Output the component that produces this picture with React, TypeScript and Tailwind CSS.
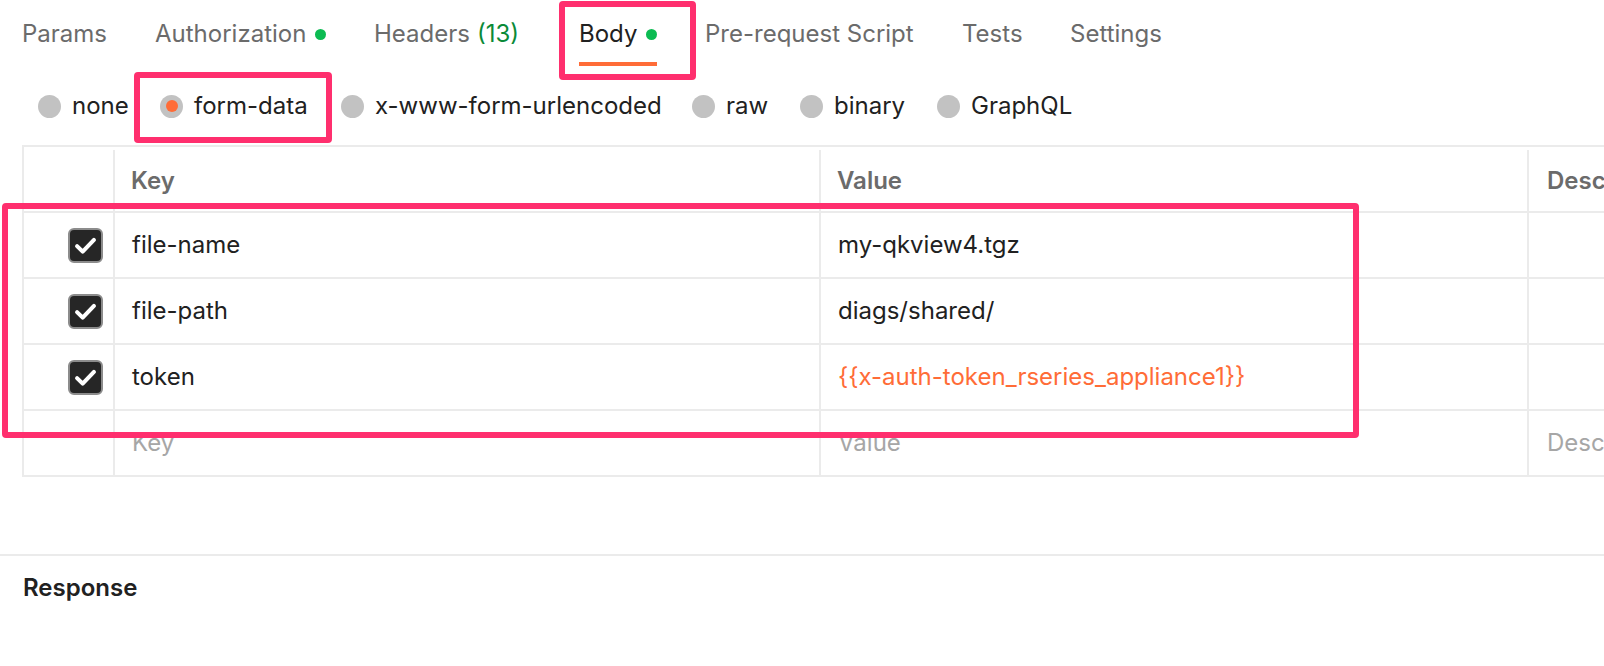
import React from "react";

const tabs = [
  { label: "Params", w: "w-[133px]" },
  { label: "Authorization", w: "w-[219px]", dot: true },
  { label: "Headers", w: "w-[205px]", count: "(13)" },
  { label: "Body", w: "w-[126px]", dot: true, active: true },
  { label: "Pre-request Script", w: "w-[257px]" },
  { label: "Tests", w: "w-[108px]" },
  { label: "Settings", w: "w-[160px]" },
];

const bodyTypes = [
  { label: "none", w: "w-[122px]" },
  { label: "form-data", w: "w-[181px]", selected: true },
  { label: "x-www-form-urlencoded", w: "w-[351px]" },
  { label: "raw", w: "w-[108px]" },
  { label: "binary", w: "w-[137px]" },
  { label: "GraphQL", w: "w-[160px]" },
];

const rows = [
  { key: "file-name", value: "my-qkview4.tgz" },
  { key: "file-path", value: "diags/shared/" },
  { key: "token", value: "{{x-auth-token_rseries_appliance1}}", variable: true },
];

function Checkbox() {
  return (
    <div className="flex h-[35px] w-[35px] items-center justify-center rounded-[6px] border-2 border-[#8c8c8c] bg-[#262626]">
      <svg viewBox="0 0 24 24" className="h-[27px] w-[27px]" fill="none">
        <path d="M4.5 12.5l5 5L19.5 7" stroke="#fff" strokeWidth="3.6" strokeLinecap="round" strokeLinejoin="round" />
      </svg>
    </div>
  );
}

function Radio({ selected }: { selected?: boolean }) {
  return (
    <span className="flex h-[23px] w-[23px] shrink-0 items-center justify-center rounded-full bg-[#c2c2c2]">
      {selected && <span className="h-[12px] w-[12px] rounded-full bg-[#ff6c37]" />}
    </span>
  );
}

export default function App() {
  return (
    <div className="relative h-[666px] w-full overflow-hidden bg-white font-['Inter','Noto_Sans',sans-serif] text-[24px] text-[#212121]">
      {/* request tabs */}
      <div className="flex pl-[22px] pt-[20px]">
        {tabs.map((t) => (
          <div key={t.label} className={`${t.w} shrink-0`}>
            <div className={`flex h-[28px] items-center leading-[28px] ${t.active ? "text-[#212121]" : "text-[#6b6b6b]"}`}>
              {t.label}
              {t.count && <span className="ml-[7px] text-[#0a8a37]">{t.count}</span>}
              {t.dot && <span className="ml-[9px] h-[11px] w-[11px] rounded-full bg-[#0cbb52]" />}
            </div>
            {t.active && <div className="mt-[14px] h-[4px] w-[78px] bg-[#ff6c37]" />}
          </div>
        ))}
      </div>

      {/* body type radios */}
      <div className="mt-[26px] flex pl-[38px]">
        {bodyTypes.map((b) => (
          <label key={b.label} className={`${b.w} flex h-[28px] shrink-0 items-center gap-[11px]`}>
            <Radio selected={b.selected} />
            <span>{b.label}</span>
          </label>
        ))}
      </div>

      {/* form-data table */}
      <div className="ml-[22px] mt-[25px] w-[1650px] border-l-2 border-t-2 border-[#ebebeb]">
        <div className="grid h-[66px] grid-cols-[91px_706px_708px_1fr] border-b-2 border-[#ebebeb] pt-[3px] font-semibold text-[#6b6b6b]">
          <div className="border-r-2 border-[#ebebeb]" />
          <div className="flex items-center border-r-2 border-[#ebebeb] pl-[16px]">Key</div>
          <div className="flex items-center border-r-2 border-[#ebebeb] pl-[16px]">Value</div>
          <div className="flex items-center pl-[18px]">Description</div>
        </div>
        {rows.map((r) => (
          <div key={r.key} className="grid h-[66px] grid-cols-[91px_706px_708px_1fr] border-b-2 border-[#ebebeb]">
            <div className="flex items-center justify-end border-r-2 border-[#ebebeb] pr-[10px]">
              <Checkbox />
            </div>
            <div className="flex items-center border-r-2 border-[#ebebeb] pl-[17px]">{r.key}</div>
            <div className={`flex items-center border-r-2 border-[#ebebeb] pl-[17px] ${r.variable ? "text-[#ff6c37]" : ""}`}>
              {r.value}
            </div>
            <div />
          </div>
        ))}
        <div className="grid h-[66px] grid-cols-[91px_706px_708px_1fr] border-b-2 border-[#ebebeb] text-[#a6a6a6]">
          <div className="border-r-2 border-[#ebebeb]" />
          <div className="flex items-center border-r-2 border-[#ebebeb] pl-[17px]">Key</div>
          <div className="flex items-center border-r-2 border-[#ebebeb] pl-[17px]">Value</div>
          <div className="flex items-center pl-[18px]">Description</div>
        </div>
      </div>

      {/* response pane */}
      <div className="mt-[77px] border-t-2 border-[#ebebeb] pl-[23px] pt-[18px]">
        <div className="font-semibold leading-[28px] text-[#212121]">Response</div>
      </div>

      {/* annotation boxes */}
      <div className="absolute left-[559px] top-[1px] h-[79px] w-[137px] rounded-[4px] border-[6px] border-[#ff2f6e]" />
      <div className="absolute left-[134px] top-[72px] h-[71px] w-[198px] rounded-[4px] border-[6px] border-[#ff2f6e]" />
      <div className="absolute left-[2px] top-[203px] h-[235px] w-[1357px] rounded-[4px] border-[6px] border-[#ff2f6e]" />
    </div>
  );
}
